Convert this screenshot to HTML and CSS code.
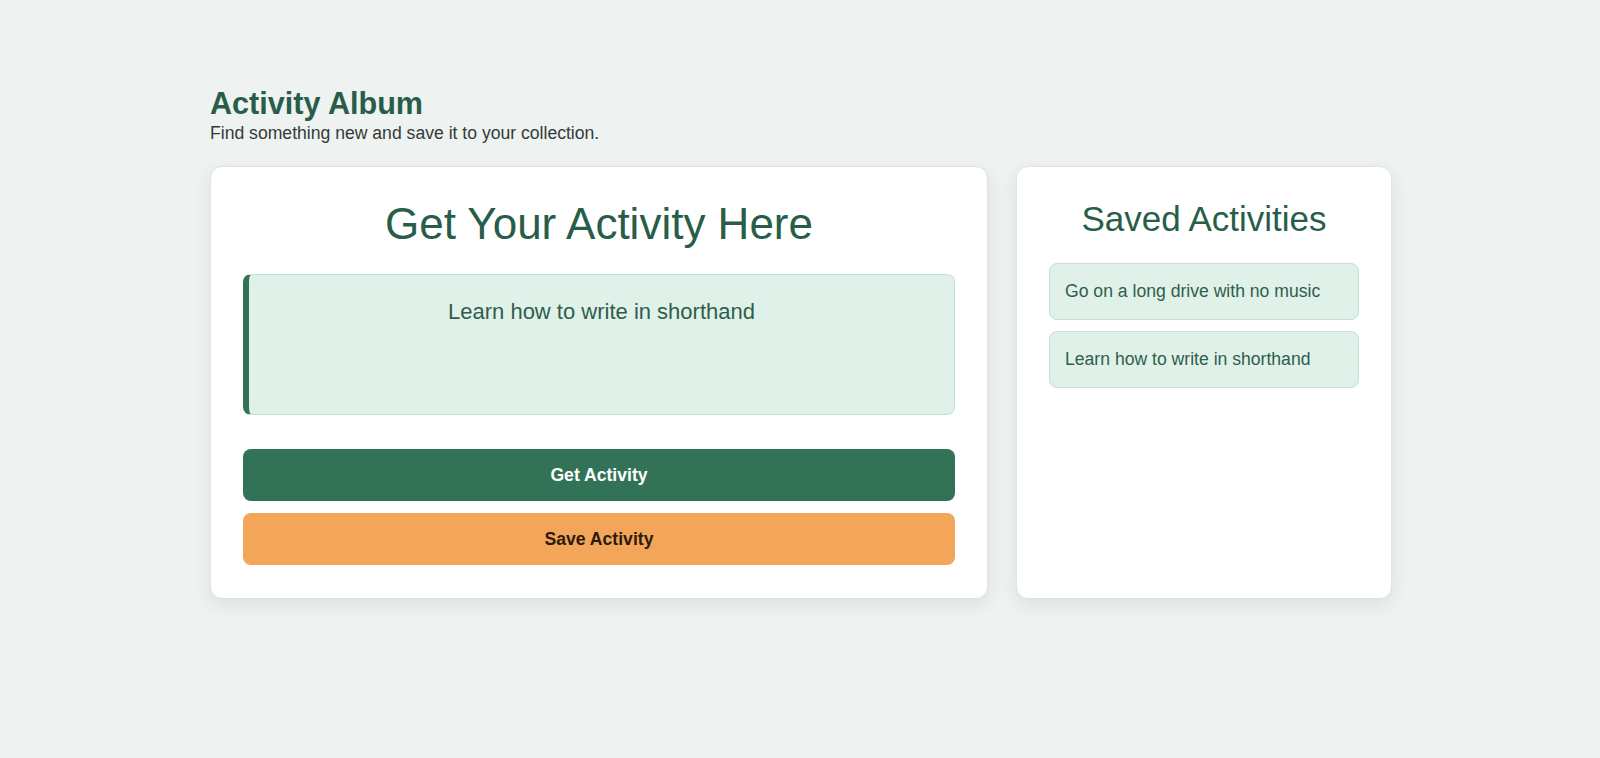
FILE: index.html
```html
<!DOCTYPE html>
<html lang="en">
<head>
<meta charset="utf-8">
<title>Activity Album</title>
<link rel="stylesheet" href="styles.css">
</head>
<body>
<div class="page">
  <header class="page-header">
    <h1 class="page-title">Activity Album</h1>
    <p class="page-subtitle">Find something new and save it to your collection.</p>
  </header>
  <main class="layout">
    <section class="card card-main">
      <h2 class="main-heading">Get Your Activity Here</h2>
      <div class="activity-box">Learn how to write in shorthand</div>
      <div class="actions">
        <button class="btn btn-get" type="button">Get Activity</button>
        <button class="btn btn-save" type="button">Save Activity</button>
      </div>
    </section>
    <aside class="card card-saved">
      <h2 class="saved-heading">Saved Activities</h2>
      <ul class="saved-list">
        <li class="saved-item">Go on a long drive with no music</li>
        <li class="saved-item">Learn how to write in shorthand</li>
      </ul>
    </aside>
  </main>
</div>
</body>
</html>
```

FILE: styles.css
```css
* { box-sizing: border-box; }

html, body {
  margin: 0;
  padding: 0;
}

body {
  background: #eef2f0;
  font-family: "Liberation Sans", Arial, sans-serif;
  color: #2d5e4b;
  min-height: 758px;
}

.page {
  width: 1182px;
  margin-left: calc(50% - 590px);
  padding-top: 86px;
}

.page-header {
  margin-bottom: 23px;
}

.page-title {
  margin: 0;
  font-size: 30.6px;
  line-height: 34px;
  font-weight: 700;
  color: #285e49;
}

.page-subtitle {
  margin: 3px 0 0;
  font-size: 17.6px;
  line-height: 20px;
  color: #343b38;
}

.layout {
  display: grid;
  grid-template-columns: 778px 376px;
  gap: 28px;
  align-items: stretch;
}

.card {
  background: #ffffff;
  border: 1px solid #dde3e0;
  border-radius: 12px;
  padding: 32px 32px 33px;
  box-shadow: 0 6px 18px rgba(40, 60, 50, 0.09);
}

.main-heading {
  margin: 0 0 25px;
  font-size: 44px;
  line-height: 50px;
  font-weight: 400;
  text-align: center;
  color: #285e49;
}

.activity-box {
  height: 141px;
  background: #e0f1e9;
  border: 1px solid #c4e2d4;
  border-left: 6px solid #327357;
  border-radius: 8px;
  padding: 24px 24px;
  font-size: 22px;
  line-height: 26px;
  text-align: center;
  color: #2f5e4c;
}

.actions {
  margin-top: 34px;
  display: flex;
  flex-direction: column;
  gap: 12px;
}

.btn {
  display: block;
  width: 100%;
  height: 52px;
  border: none;
  border-radius: 8px;
  font-family: "Liberation Sans", Arial, sans-serif;
  font-size: 17.6px;
  font-weight: 700;
  cursor: pointer;
}

.btn-get {
  background: #327357;
  color: #ffffff;
}

.btn-save {
  background: #f3a65a;
  color: #2e1a0a;
}

.saved-heading {
  margin: 0 0 24px;
  font-size: 35px;
  line-height: 40px;
  font-weight: 400;
  text-align: center;
  color: #285e49;
}

.saved-list {
  list-style: none;
  margin: 0;
  padding: 0;
  display: flex;
  flex-direction: column;
  gap: 11px;
}

.saved-item {
  background: #e0f1e9;
  border: 1px solid #c4e2d4;
  border-radius: 8px;
  padding: 17px 15px;
  font-size: 17.6px;
  line-height: 21px;
  color: #2f5e4c;
}
```
